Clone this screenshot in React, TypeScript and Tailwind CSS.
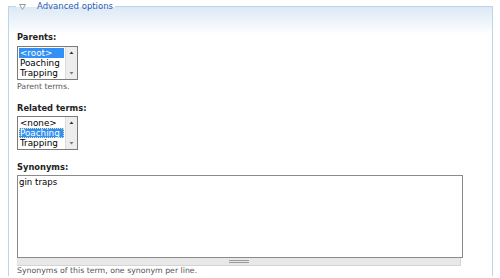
import React from "react";

interface ListOption {
  label: string;
  selected?: boolean;
  focused?: boolean;
}

const PARENT_OPTIONS: ListOption[] = [
  { label: "<root>", selected: true },
  { label: "Poaching" },
  { label: "Trapping" },
];

const RELATED_OPTIONS: ListOption[] = [
  { label: "<none>" },
  { label: "Poaching", selected: true, focused: true },
  { label: "Trapping" },
];

function ListBox({ options, className = "" }: { options: ListOption[]; className?: string }) {
  return (
    <div className={`flex h-[34px] w-[61px] border border-[#7b7b7b] bg-white ${className}`}>
      <ul className="flex-1 pt-[1px]">
        {options.map((opt) => (
          <li
            key={opt.label}
            className={`mx-[1px] h-[10px] pl-[1px] text-[8.8px] leading-[10px] whitespace-nowrap ${
              opt.selected ? "bg-[#3390f5] text-white" : "text-black"
            } ${opt.focused ? "outline outline-1 outline-dotted -outline-offset-1 outline-[#f3e3a0]" : ""}`}
          >
            {opt.label}
          </li>
        ))}
      </ul>
      <div className="flex w-[12px] flex-col justify-between border-l border-[#dcdcdc] bg-[#ededed] py-[3px]">
        <svg width="11" height="5" viewBox="0 0 11 5" className="mx-auto">
          <polygon points="3.5,4 7.5,4 5.5,1.5" fill="#333" />
        </svg>
        <svg width="11" height="5" viewBox="0 0 11 5" className="mx-auto">
          <polygon points="3.5,1 7.5,1 5.5,3.5" fill="#777" />
        </svg>
      </div>
    </div>
  );
}

function FieldLabel({ children }: { children: React.ReactNode }) {
  return <label className="block text-[8.3px] font-bold leading-[11px] text-[#222]">{children}</label>;
}

function Description({ children }: { children: React.ReactNode }) {
  return <div className="text-[7.8px] leading-[10px] text-[#555]">{children}</div>;
}

export default function App() {
  return (
    <div className="h-[278px] w-[500px] overflow-hidden bg-white font-['DejaVu_Sans',sans-serif]">
      <fieldset className="ml-[8px] w-[485px] border border-b-0 border-[#bcd5ec] bg-[linear-gradient(#dce9f5,#ffffff_28px)] px-[8px]">
        <legend className="-ml-[1px] flex h-[13px] items-center px-[2px]">
          <svg width="7" height="6" viewBox="0 0 7 6" className="ml-[1px]">
            <polygon points="0.5,0.5 6.5,0.5 3.5,5.5" fill="#fff" stroke="#9a9a9a" strokeWidth="1" />
          </svg>
          <span className="ml-[11px] text-[8.5px] leading-[13px] text-[#2a5db0]">Advanced options</span>
        </legend>

        <div className="pt-[19px]">
          <div className="mb-[11px]">
            <FieldLabel>Parents:</FieldLabel>
            <ListBox options={PARENT_OPTIONS} className="mt-[3px]" />
            <div className="mt-[2px]">
              <Description>Parent terms.</Description>
            </div>
          </div>

          <div className="mb-[12px]">
            <FieldLabel>Related terms:</FieldLabel>
            <ListBox options={RELATED_OPTIONS} className="mt-[2px]" />
          </div>

          <div>
            <FieldLabel>Synonyms:</FieldLabel>
            <textarea
              readOnly
              defaultValue="gin traps"
              className="mt-[2px] block h-[83px] w-[446px] resize-none border border-[#8a8a8a] bg-white px-[1px] pt-[1px] text-[8.6px] leading-[10px] text-black outline-none"
            />
            <div className="flex h-[8px] w-[444px] items-center justify-center border-r border-b border-[#d4d4d4] bg-[#e8e8e8]">
              <div className="flex w-[20px] flex-col gap-[1px]">
                <div className="h-[1px] bg-[#9a9a9a]" />
                <div className="h-[1px] bg-[#9a9a9a]" />
              </div>
            </div>
            <Description>Synonyms of this term, one synonym per line.</Description>
          </div>
        </div>
      </fieldset>
    </div>
  );
}
